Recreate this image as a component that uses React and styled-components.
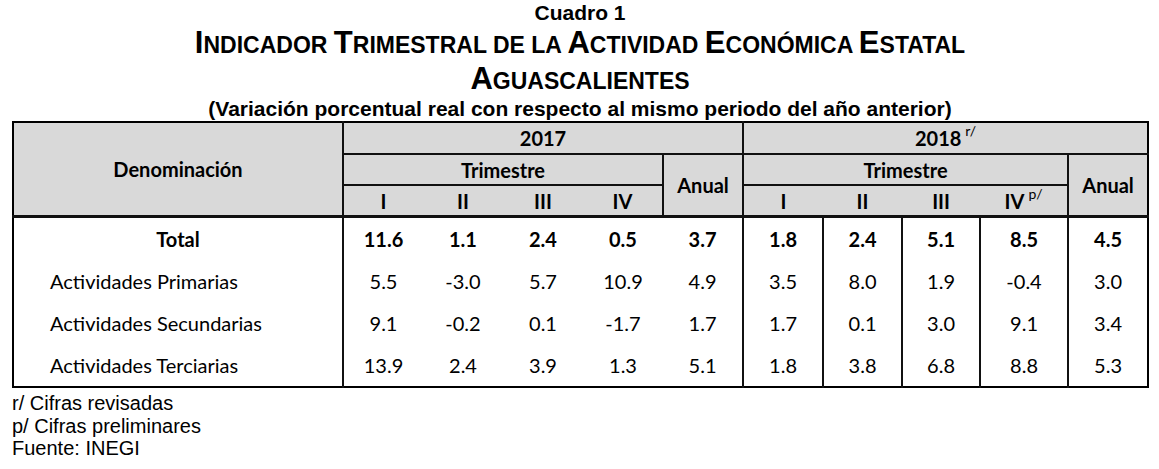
import React from 'react';
import styled, { createGlobalStyle } from 'styled-components';

const GlobalStyle = createGlobalStyle`
  html, body { margin: 0; padding: 0; background: #ffffff; }
  body { font-family: "Liberation Sans", Arial, sans-serif; color: #000; }
`;

const Page = styled.div`
  width: 1159px;
  height: 469px;
  box-sizing: border-box;
  padding: 0 0 0 12px;
  overflow: hidden;
`;

const Heading = styled.header`
  width: 1136px;
  text-align: center;
  font-family: "Liberation Sans", Arial, sans-serif;
  font-weight: bold;
  color: #000;
`;

const Kicker = styled.div`
  font-size: 21px;
  line-height: 25px;
`;

const Title = styled.div`
  height: 36px;
  font-size: 31px;
  line-height: 36px;
  text-transform: uppercase;
`;

const Small = styled.span`
  font-size: 23px;
  line-height: 0;
`;

const Subtitle = styled.div`
  font-size: 21px;
  line-height: 24px;
`;

const Table = styled.table`
  border-collapse: collapse;
  table-layout: fixed;
  width: 1136px;
  font-family: Lato, "Open Sans", sans-serif;
  font-size: 20px;
  color: #000;
  border: 2px solid #000;
`;

const Col = styled.col`
  width: ${(p) => p.$w}px;
`;

const line = (w) => (w ? `${w}px solid #111` : 'none');

const HeadCell = styled.th`
  background: #d9d9d9;
  font-weight: bold;
  text-align: center;
  padding: 0;
  height: ${(p) => p.$h || 29}px;
  border-left: ${(p) => line(p.$l)};
  border-right: ${(p) => line(p.$r)};
  border-bottom: ${(p) => line(p.$b)};
  border-top: none;
`;

const Cell = styled.td`
  height: 42px;
  padding: ${(p) => (p.$left ? '0 0 0 36px' : '0')};
  text-align: ${(p) => (p.$left ? 'left' : 'center')};
  font-weight: ${(p) => (p.$bold ? 'bold' : 'normal')};
  border-left: ${(p) => line(p.$l)};
  border-right: ${(p) => line(p.$r)};
  white-space: nowrap;
`;

const Sup = styled.sup`
  font-size: 14px;
  font-weight: normal;
  vertical-align: 10px;
  line-height: 0;
  margin-left: 4px;
`;

const Notes = styled.div`
  margin-top: 4px;
  font-family: "Liberation Sans", Arial, sans-serif;
  font-size: 20px;
  line-height: 22.5px;
`;

const cols = [330, 80, 80, 80, 80, 80, 80, 79, 78, 88, 80];

const rows = [
  { name: 'Total', bold: true, v: ['11.6', '1.1', '2.4', '0.5', '3.7', '1.8', '2.4', '5.1', '8.5', '4.5'] },
  { name: 'Actividades Primarias', v: ['5.5', '-3.0', '5.7', '10.9', '4.9', '3.5', '8.0', '1.9', '-0.4', '3.0'] },
  { name: 'Actividades Secundarias', v: ['9.1', '-0.2', '0.1', '-1.7', '1.7', '1.7', '0.1', '3.0', '9.1', '3.4'] },
  { name: 'Actividades Terciarias', v: ['13.9', '2.4', '3.9', '1.3', '5.1', '1.8', '3.8', '6.8', '8.8', '5.3'] },
];

// vertical separators on the right of each data column (index 0..9)
const rightLines = [0, 0, 0, 0, 2, 2, 2, 2, 2, 0];

// Word-style small caps: capitalised words keep a full-size initial
function SmallCaps({ text }) {
  return text.split(' ').map((word, i) => {
    const isCap = word[0] === word[0].toUpperCase();
    return (
      <React.Fragment key={i}>
        {i > 0 ? <Small> </Small> : null}
        {isCap ? (
          <>
            {word[0]}
            <Small>{word.slice(1)}</Small>
          </>
        ) : (
          <Small>{word}</Small>
        )}
      </React.Fragment>
    );
  });
}

export default function App() {
  return (
    <>
      <GlobalStyle />
      <Page>
        <Heading>
          <Kicker>Cuadro 1</Kicker>
          <Title>
            <SmallCaps text="Indicador Trimestral de la Actividad Económica Estatal" />
          </Title>
          <Title>
            <SmallCaps text="Aguascalientes" />
          </Title>
          <Subtitle>(Variación porcentual real con respecto al mismo periodo del año anterior)</Subtitle>
        </Heading>
        <Table>
          <colgroup>
            {cols.map((w, i) => (
              <Col key={i} $w={w} />
            ))}
          </colgroup>
          <thead>
            <tr>
              <HeadCell rowSpan={3} $r={2} $b={3} $h={30}>Denominación</HeadCell>
              <HeadCell colSpan={5} $r={2} $b={2} $h={30}>2017</HeadCell>
              <HeadCell colSpan={5} $b={2} $h={30}>
                2018<Sup>r/</Sup>
              </HeadCell>
            </tr>
            <tr>
              <HeadCell colSpan={4} $b={2}>Trimestre</HeadCell>
              <HeadCell rowSpan={2} $l={2} $r={2} $b={3}>Anual</HeadCell>
              <HeadCell colSpan={4} $b={2}>Trimestre</HeadCell>
              <HeadCell rowSpan={2} $l={2} $b={3}>Anual</HeadCell>
            </tr>
            <tr>
              <HeadCell $b={3}>I</HeadCell>
              <HeadCell $b={3}>II</HeadCell>
              <HeadCell $b={3}>III</HeadCell>
              <HeadCell $b={3}>IV</HeadCell>
              <HeadCell $b={3}>I</HeadCell>
              <HeadCell $b={3}>II</HeadCell>
              <HeadCell $b={3}>III</HeadCell>
              <HeadCell $b={3}>
                IV<Sup>p/</Sup>
              </HeadCell>
            </tr>
          </thead>
          <tbody>
            {rows.map((r) => (
              <tr key={r.name}>
                <Cell $left={!r.bold} $bold={r.bold} $r={2}>
                  {r.name}
                </Cell>
                {r.v.map((val, i) => (
                  <Cell key={i} $bold={r.bold} $r={rightLines[i]}>
                    {val}
                  </Cell>
                ))}
              </tr>
            ))}
          </tbody>
        </Table>
        <Notes>
          <div>r/ Cifras revisadas</div>
          <div>p/ Cifras preliminares</div>
          <div>Fuente: INEGI</div>
        </Notes>
      </Page>
    </>
  );
}
